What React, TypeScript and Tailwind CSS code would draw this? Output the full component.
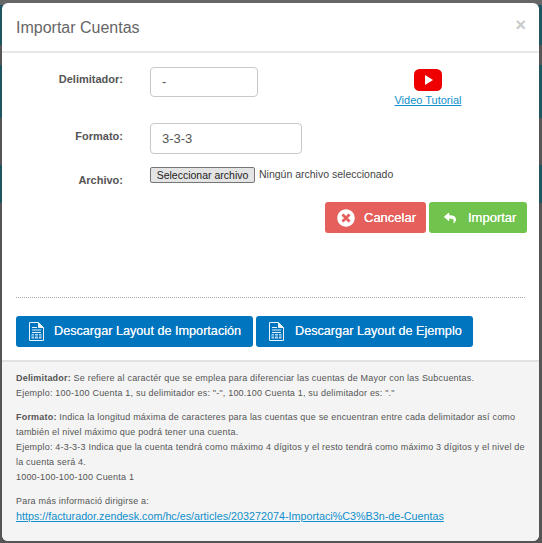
import { FaReply, FaTimesCircle } from 'react-icons/fa';

function FileIcon() {
  return (
    <svg width="15" height="19" viewBox="0 0 15 19" className="shrink-0">
      <path d="M0.5 0.5H9.5L14.5 5.5V18.5H0.5Z" fill="none" stroke="#e8f2fa" strokeWidth="1" />
      <path d="M9.5 0.5V5.5H14.5" fill="#e8f2fa" stroke="#e8f2fa" strokeWidth="1" />
      <path d="M3 5.5H8M3 8H12M3 10.5H12" stroke="#e8f2fa" strokeWidth="1" />
      <path d="M2.5 12H12.5V16.5H2.5Z" fill="#b9d8ef" />
      <path d="M5.5 12V16.5M9.5 12V16.5M2.5 14H12.5" stroke="#0075bf" strokeWidth="1" />
    </svg>
  );
}

function YoutubeIcon() {
  return (
    <svg width="28" height="22" viewBox="0 0 28 22">
      <rect width="28" height="22" rx="5.5" fill="#ee0000" />
      <path d="M11 6L19 11L11 16Z" fill="#ffffff" />
    </svg>
  );
}

export default function App() {
  return (
    <div className="h-[543px] w-[542px] overflow-hidden bg-[linear-gradient(to_bottom,#666666_0,#666666_5px,#1f5560_5px,#1f5560_45px,#555555_45px,#555555_65px,#1f5560_65px,#1f5560_118px,#555555_118px,#555555_165px,#1f5560_165px,#1f5560_203px,#555555_203px)] pl-[2px] pt-[3px] font-['Liberation_Sans',Arial,sans-serif]">
      <div className="flex h-[538px] w-[537px] flex-col overflow-hidden rounded-md bg-white">
        <div className="flex h-[50px] items-start justify-between border-b-2 border-[#e8e8e8] pl-[14px] pr-[13px]">
          <h4 className="pt-[15px] text-[16px] leading-5 text-[#666666]">Importar Cuentas</h4>
          <span className="pt-[12px] text-[18px] font-bold leading-5 text-[#c9c9c9]">×</span>
        </div>

        <div className="relative h-[244px] shrink-0 pt-[13px]">
          <div className="flex h-[31px] items-center">
            <label className="w-[121px] pb-[4px] text-right text-[11px] font-bold text-[#555555]">Delimitador:</label>
            <input
              readOnly
              defaultValue="-"
              className="ml-[27px] h-[30px] w-[108px] rounded border border-[#c8c8c8] bg-white px-[11px] text-[13px] text-[#555555]"
            />
            <div className="ml-[137px] flex w-[66px] flex-col items-center pt-[12px]">
              <YoutubeIcon />
              <a href="#" className="mt-[3px] whitespace-nowrap text-[11px] leading-[13px] text-[#0f8fcb] underline">Video Tutorial</a>
            </div>
          </div>

          <div className="mt-[26px] flex h-[31px] items-center">
            <label className="w-[121px] pb-[4px] text-right text-[11px] font-bold text-[#555555]">Formato:</label>
            <input
              readOnly
              defaultValue="3-3-3"
              className="ml-[27px] h-[31px] w-[152px] rounded border border-[#c8c8c8] bg-white px-[11px] text-[13px] text-[#555555]"
            />
          </div>

          <div className="mt-[13px] flex h-[16px] items-start">
            <label className="w-[121px] pt-[6px] text-right text-[11px] font-bold leading-[15px] text-[#555555]">Archivo:</label>
            <button className="ml-[27px] h-[16px] w-[105px] rounded-[2px] border border-[#767676] bg-[#e4e4e4] text-[10.5px] leading-none text-[#222222]">Seleccionar archivo</button>
            <span className="ml-[4px] pt-[1px] text-[10.5px] leading-[13px] text-[#444444]">Ningún archivo seleccionado</span>
          </div>

          <div className="mt-[19px] flex justify-end gap-[3px] pr-[12px]">
            <button className="flex h-[31px] w-[101px] items-center rounded-[3px] bg-[#e55f5d] pl-[12px] text-[13px] text-white [text-shadow:0_0_0.6px_#ffffff]">
              <FaTimesCircle className="text-[18px]" />
              <span className="ml-[9px]">Cancelar</span>
            </button>
            <button className="flex h-[31px] w-[98px] items-center rounded-[3px] bg-[#70c34c] pl-[15px] text-[13px] text-white [text-shadow:0_0_0.6px_#ffffff]">
              <FaReply className="text-[12px]" />
              <span className="ml-[12px]">Importar</span>
            </button>
          </div>
        </div>

        <div className="mx-[14px] border-t border-dotted border-[#aaaaaa]" />

        <div className="mt-[18px] flex gap-[3px] pl-[14px]">
          <button className="flex h-[31px] w-[237px] items-center rounded-[3px] bg-[#0075bf] pl-[13px] text-[12.66px] text-[#eef6fc] [text-shadow:0_0_0.6px_#ffffff]">
            <FileIcon />
            <span className="ml-[10px]">Descargar Layout de Importación</span>
          </button>
          <button className="flex h-[31px] w-[217px] items-center rounded-[3px] bg-[#0075bf] pl-[13px] text-[12.66px] text-[#eef6fc] [text-shadow:0_0_0.6px_#ffffff]">
            <FileIcon />
            <span className="ml-[11px]">Descargar Layout de Ejemplo</span>
          </button>
        </div>

        <div className="mt-[13px] flex-1 border-t-2 border-[#e2e2e2] bg-[#f4f4f4] px-[14px] pt-[9px] text-[9px] leading-[15px] tracking-[0.2px] text-[#555555]">
          <p>
            <b>Delimitador:</b> Se refiere al caractér que se emplea para diferenciar las cuentas de Mayor con las Subcuentas.
            <br />
            Ejemplo: 100-100 Cuenta 1, su delimitador es: "-", 100.100 Cuenta 1, su delimitador es: "."
          </p>
          <p className="mt-[9px]">
            <b>Formato:</b> Indica la longitud máxima de caracteres para las cuentas que se encuentran entre cada delimitador así como también el nivel máximo que podrá tener una cuenta.
            <br />
            Ejemplo: 4-3-3-3 Indica que la cuenta tendrá como máximo 4 dígitos y el resto tendrá como máximo 3 dígitos y el nivel de la cuenta será 4.
            <br />
            1000-100-100-100 Cuenta 1
          </p>
          <p className="mt-[9px]">
            Para más informació dirigirse a:
            <br />
            <a href="#" className="text-[10.75px] tracking-normal text-[#0f8fcb] underline">https://facturador.zendesk.com/hc/es/articles/203272074-Importaci%C3%B3n-de-Cuentas</a>
          </p>
        </div>
      </div>
    </div>
  );
}
